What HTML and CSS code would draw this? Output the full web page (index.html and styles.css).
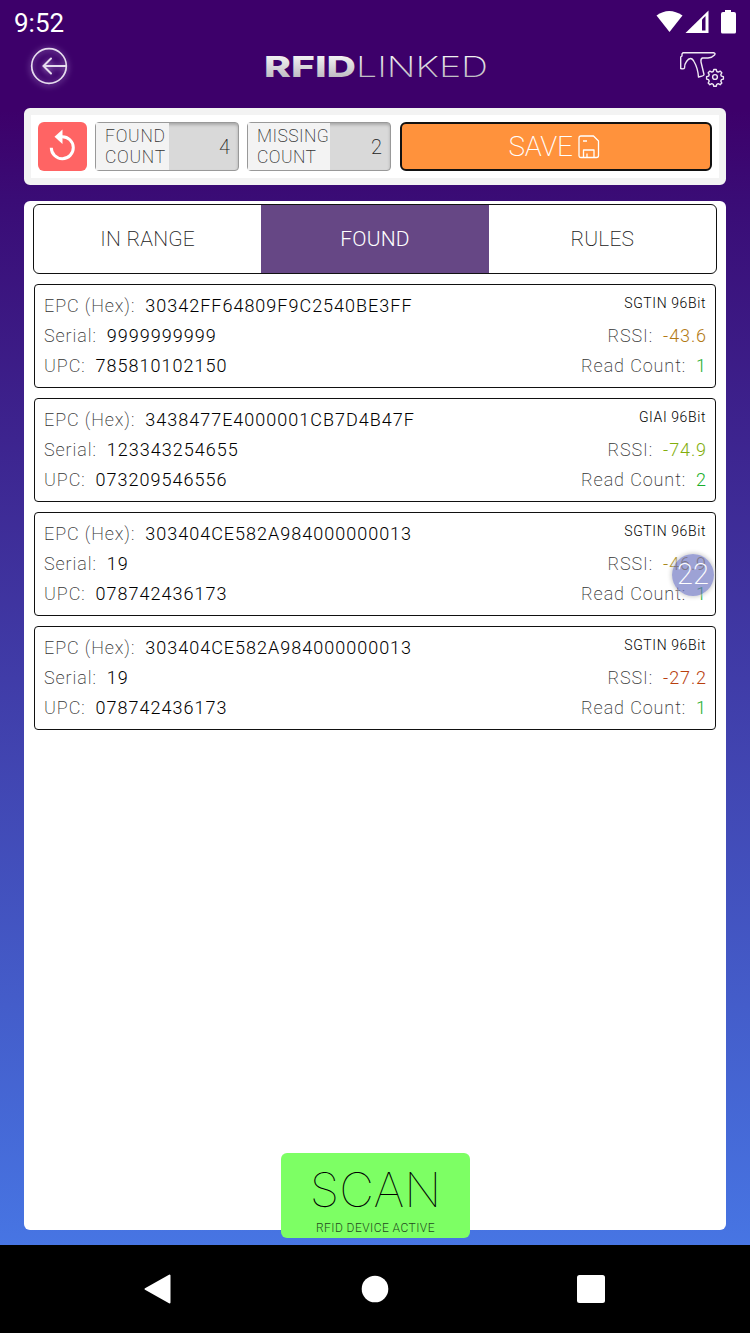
FILE: index.html
```html
<!DOCTYPE html>
<html lang="en">
<head>
  <meta charset="UTF-8" />
  <title>RFIDLinked</title>
  <meta name="viewport" content="width=device-width, initial-scale=1" />
  <link rel="stylesheet" href="styles.css">
</head>
<body>
  <div class="statusbar">
    <span class="clock">9:52</span>
    <svg class="status-icons" width="84" height="26" viewBox="0 0 84 26">
      <path d="M0.500 5.500Q13 -3.500 26.500 5.500L13.500 22Z" fill="#fff" />
      <path d="M29.500 23L52.500 0.500V23Z" fill="#fff" />
      <path d="M46 9.500L49.500 6V20.500H46Z" fill="#3d006a" />
      <path d="M69 0h6v2h3q2 0 2 2v18q0 1.500-1.500 1.500h-12q-1.500 0-1.500-1.500v-18q0-2 2-2h2z" fill="#fff" />
    </svg>
  </div>

  <header class="header">
    <svg class="back" width="38" height="38" viewBox="0 0 38 38" fill="none" stroke="#e6dcee" stroke-width="1.700">
      <circle cx="19" cy="19" r="17.300" />
      <path d="M36 19H13.500M21 11.500L13.500 19L21 26.500" stroke-width="2" stroke-linecap="round" />
    </svg>
    <svg class="logo" width="224" height="30" viewBox="0 0 224 30">
      <defs>
        <linearGradient id="silver" x1="0" y1="0" x2="0" y2="1">
          <stop offset="0.200" stop-color="#f2f2f2" />
          <stop offset="0.850" stop-color="#bcb9c0" />
        </linearGradient>
      </defs>
      <text class="logo-bold" x="-3" y="25" textLength="92" lengthAdjust="spacingAndGlyphs">RFID</text>
      <text class="logo-thin" x="89" y="25" textLength="132" lengthAdjust="spacingAndGlyphs">LINKED</text>
    </svg>
    <svg class="gun" width="46" height="36" viewBox="0 0 46 36" fill="none" stroke="#efe8f3" stroke-width="1.400" stroke-linejoin="round">
      <path d="M4 1.700H34.500Q37 2.200 35.500 4Q33 6.800 29 7H23.500Q21.500 7.500 22 11L25 23.500Q25 25 19.500 26Q18.800 17 15 10.500Q13.500 7.500 11.500 7.500Q9.500 7.500 7.500 10.500Q5.500 13 5.500 17Q5 18.300 1.700 17.500V6L3 5V3Z" />
      <circle cx="36" cy="26" r="2.400" />
      <path d="M34.800 18.500h2.400l.6 2 1.400.6 1.900-1 1.700 1.700-1 1.900.6 1.400 2 .6v2.400l-2 .6-.6 1.400 1 1.900-1.700 1.700-1.900-1-1.400.6-.6 2h-2.400l-.6-2-1.400-.6-1.900 1-1.700-1.700 1-1.900-.6-1.400-2-.6v-2.400l2-.6.6-1.400-1-1.900 1.700-1.700 1.900 1 1.400-.6z" />
    </svg>
  </header>

  <section class="toolbar">
    <button class="reset">
      <svg width="49" height="49" viewBox="0 0 49 49">
        <path d="M24 14.700A11 11 0 1 1 13.300 25.700" fill="none" stroke="#fff" stroke-width="3" />
        <path d="M24.500 7.500V22L16.500 14.800Z" fill="#fff" />
      </svg>
    </button>
    <div class="count">
      <div class="count-label found-label">FOUND<br>COUNT</div>
      <div class="count-value">4</div>
    </div>
    <div class="count">
      <div class="count-label missing-label">MISSING<br>COUNT</div>
      <div class="count-value">2</div>
    </div>
    <button class="save">
      <span>SAVE</span>
      <svg width="22" height="24" viewBox="0 0 22 24" fill="none" stroke="#fff" stroke-width="1.300" stroke-linejoin="round">
        <path d="M3 1H15.500L20.500 6V20.500Q20.500 22.500 18.500 22.500H3Q1 22.500 1 20.500V3Q1 1 3 1Z" />
        <path d="M5.500 22V15H16V22M5 6H9M9 22v-3.500" />
      </svg>
    </button>
  </section>

  <main class="panel">
    <nav class="tabs">
      <div class="tab">IN RANGE</div>
      <div class="tab active">FOUND</div>
      <div class="tab">RULES</div>
    </nav>

    <div class="card">
      <div class="row"><label>EPC (Hex):</label><span class="value">30342FF64809F9C2540BE3FF</span><span class="type">SGTIN 96Bit</span></div>
      <div class="row"><label>Serial:</label><span class="value">9999999999</span><label class="right">RSSI:</label><span class="num amber">-43.6</span></div>
      <div class="row"><label>UPC:</label><span class="value">785810102150</span><label class="right">Read Count:</label><span class="num green">1</span></div>
    </div>

    <div class="card">
      <div class="row"><label>EPC (Hex):</label><span class="value">3438477E4000001CB7D4B47F</span><span class="type">GIAI 96Bit</span></div>
      <div class="row"><label>Serial:</label><span class="value">123343254655</span><label class="right">RSSI:</label><span class="num lime">-74.9</span></div>
      <div class="row"><label>UPC:</label><span class="value">073209546556</span><label class="right">Read Count:</label><span class="num green">2</span></div>
    </div>

    <div class="card">
      <div class="row"><label>EPC (Hex):</label><span class="value">303404CE582A984000000013</span><span class="type">SGTIN 96Bit</span></div>
      <div class="row"><label>Serial:</label><span class="value">19</span><label class="right">RSSI:</label><span class="num gold">-46.9</span></div>
      <div class="row"><label>UPC:</label><span class="value">078742436173</span><label class="right">Read Count:</label><span class="num green">1</span></div>
      <div class="bubble">22</div>
    </div>

    <div class="card">
      <div class="row"><label>EPC (Hex):</label><span class="value">303404CE582A984000000013</span><span class="type">SGTIN 96Bit</span></div>
      <div class="row"><label>Serial:</label><span class="value">19</span><label class="right">RSSI:</label><span class="num red">-27.2</span></div>
      <div class="row"><label>UPC:</label><span class="value">078742436173</span><label class="right">Read Count:</label><span class="num green">1</span></div>
    </div>

    <button class="scan">
      <span class="scan-title">SCAN</span>
      <span class="scan-sub">RFID DEVICE ACTIVE</span>
    </button>
  </main>

  <footer class="navbar">
    <svg width="30" height="32" viewBox="0 0 30 32"><path d="M1.500 16L25.500 2.500V29.500Z" fill="#fff" stroke="#fff" stroke-width="2" stroke-linejoin="round" /></svg>
    <svg width="30" height="32" viewBox="0 0 30 32"><circle cx="15" cy="16" r="13.300" fill="#fff" /></svg>
    <svg width="30" height="32" viewBox="0 0 30 32"><rect x="1" y="2" width="28" height="28" rx="2.500" fill="#fff" /></svg>
  </footer>
</body>
</html>
```
FILE: styles.css
```css
* { box-sizing: border-box; }
body {
  margin: 0;
  width: 750px;
  height: 1333px;
  display: flex;
  flex-direction: column;
  overflow: hidden;
  font-family: Roboto, "Liberation Sans", sans-serif;
  background: linear-gradient(#3d006a 0, #3d006a 110px, #3a0c76 200px, #4775e3 1245px);
}
button { border: 0; padding: 0; font-family: inherit; }

.statusbar {
  height: 46px;
  padding: 9px 10px 0 14px;
  display: flex;
  justify-content: space-between;
  align-items: flex-start;
  color: #fff;
}
.clock { font-size: 26px; line-height: 29px; }
.status-icons { margin-top: 1px; }

.header {
  height: 62px;
  padding: 1px 25px 0 30px;
  display: flex;
  justify-content: space-between;
  align-items: flex-start;
}
.back { filter: drop-shadow(0 1px 3px #b08fd0); }
.logo { margin: 5px 0 0 10px; overflow: visible; }
.logo text { fill: url(#silver); font-size: 29px; }
.logo-bold { font-family: Inter, sans-serif; font-weight: 800; }
.logo-thin { font-family: Inter, sans-serif; font-weight: 200; }
.gun { margin-top: 4px; }

.toolbar {
  height: 77px;
  margin: 0 24px;
  padding: 7px;
  border: 7px solid #f3f3f3;
  border-radius: 6px;
  background: #fff;
  display: flex;
  gap: 8px;
}
.reset { width: 49px; height: 49px; border-radius: 6px; background: #ff6464; }
.reset svg { display: block; }
.count {
  width: 144px;
  height: 49px;
  border: 1.500px solid #999;
  border-radius: 4px;
  background: #d9d9d9;
  display: flex;
  box-shadow: inset 0 2px 3px #aaa;
}
.count-label {
  background: #f3f3f3;
  padding: 3px 0 0 9px;
  font-size: 17.500px;
  line-height: 21px;
  font-weight: 200;
  letter-spacing: 0.700px;
  color: #333;
  white-space: nowrap;
}
.found-label { width: 73px; }
.missing-label { width: 82px; letter-spacing: 0.400px; }
.count-value {
  flex: 1;
  padding-right: 8px;
  text-align: right;
  font-size: 20px;
  line-height: 49px;
  font-weight: 200;
  color: #222;
}
.save {
  flex: 1;
  height: 49px;
  margin-left: 1px;
  border: 2px solid #111;
  border-radius: 6px;
  background: #ff923c;
  color: #fff;
  display: flex;
  justify-content: center;
  align-items: center;
  gap: 5px;
  padding-right: 4px;
  font-size: 28px;
  font-weight: 200;
  letter-spacing: -0.300px;
}

.panel {
  position: relative;
  height: 1029px;
  margin: 16px 24px 0;
  padding: 3px 10px 0;
  border-radius: 6px;
  background: #fff;
}
.tabs {
  height: 70px;
  margin: 0 -1px 10px;
  border: 1.500px solid #111;
  border-radius: 6px;
  display: flex;
  overflow: hidden;
}
.tab {
  flex: 1;
  text-align: center;
  font-size: 21px;
  line-height: 69px;
  font-weight: 200;
  letter-spacing: 0.200px;
  color: #222;
}
.tab.active { background: #664785; color: #fff; font-weight: 350; }

.card {
  position: relative;
  height: 104px;
  margin-bottom: 10px;
  padding: 6px 9px;
  border: 1.500px solid #111;
  border-radius: 4px;
}
.row {
  display: flex;
  height: 30px;
  line-height: 30px;
  font-size: 18px;
  letter-spacing: 1px;
  color: #000;
}
.row label { font-weight: 200; color: #333; margin-right: 10px; letter-spacing: 0.900px; }
.row .right { margin-left: auto; }
.value { font-weight: 350; }
.type { margin-left: auto; font-size: 14px; line-height: 24px; font-weight: 350; letter-spacing: 0.600px; }
.num { font-weight: 350; letter-spacing: 0.900px; margin-right: -1px; }
.amber { color: #b37a14; }
.lime { color: #82ae0c; }
.gold { color: #a88a1c; }
.red { color: #b8400e; }
.green { color: #18ae2b; }

.bubble {
  position: absolute;
  right: 1px;
  top: 41px;
  width: 42px;
  height: 42px;
  border-radius: 50%;
  background: rgba(104, 112, 190, 0.65);
  box-shadow: 0 0 4px 1px #ccc;
  color: #fff;
  text-align: center;
  font-size: 29px;
  line-height: 40px;
  font-weight: 200;
}

.scan {
  position: absolute;
  left: 257px;
  bottom: -8px;
  width: 189px;
  height: 85px;
  border-radius: 6px;
  background: #7dff64;
  color: #000;
  display: flex;
  flex-direction: column;
  align-items: center;
}
.scan-title {
  font-family: Inter, sans-serif;
  font-size: 48px;
  line-height: 66px;
  font-weight: 100;
  margin-top: 4px;
}
.scan-sub { font-size: 12px; line-height: 10px; font-weight: 300; letter-spacing: 0.450px; color: #234a1d; }

.navbar {
  height: 88px;
  margin-top: 15px;
  background: #000;
  display: flex;
  justify-content: center;
  align-items: center;
  gap: 186px;
}
```
